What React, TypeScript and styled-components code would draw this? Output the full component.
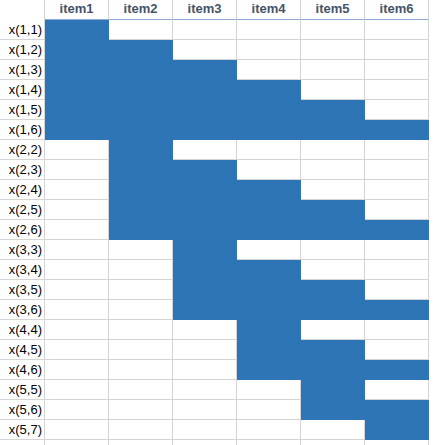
import React from "react";
import styled, { createGlobalStyle } from "styled-components";

const GlobalStyle = createGlobalStyle`
  body {
    margin: 0;
    background: #ffffff;
    overflow: hidden;
  }
`;

const ITEMS = ["item1", "item2", "item3", "item4", "item5", "item6"];

// label, first filled column, last filled column (1-based)
const ROWS: Array<[string, number, number]> = [
  ["x(1,1)", 1, 1],
  ["x(1,2)", 1, 2],
  ["x(1,3)", 1, 3],
  ["x(1,4)", 1, 4],
  ["x(1,5)", 1, 5],
  ["x(1,6)", 1, 6],
  ["x(2,2)", 2, 2],
  ["x(2,3)", 2, 3],
  ["x(2,4)", 2, 4],
  ["x(2,5)", 2, 5],
  ["x(2,6)", 2, 6],
  ["x(3,3)", 3, 3],
  ["x(3,4)", 3, 4],
  ["x(3,5)", 3, 5],
  ["x(3,6)", 3, 6],
  ["x(4,4)", 4, 4],
  ["x(4,5)", 4, 5],
  ["x(4,6)", 4, 6],
  ["x(5,5)", 5, 5],
  ["x(5,6)", 5, 6],
  ["x(5,7)", 6, 6],
];

const Sheet = styled.div`
  display: grid;
  grid-template-columns: 45px repeat(6, 64px) 1fr;
  grid-auto-rows: 20px;
  width: 434px;
  font-family: "Liberation Sans", Arial, sans-serif;
  font-size: 13px;
  color: #000000;
`;

const Corner = styled.div`
  height: 21px;
  box-sizing: border-box;
  border-right: 1px solid #d4d4d4;
`;

const HeadCell = styled.div`
  height: 21px;
  box-sizing: border-box;
  border-right: 1px solid #d4d4d4;
  border-bottom: 2px solid #8ea9db;
  display: flex;
  align-items: flex-end;
  justify-content: center;
  padding-bottom: 3px;
  font-weight: 700;
  color: #44546a;
`;

const HeadSpacer = styled.div`
  height: 21px;
`;

const Label = styled.div`
  box-sizing: border-box;
  border-right: 1px solid #d4d4d4;
  border-bottom: 1px solid #d4d4d4;
  display: flex;
  align-items: flex-end;
  justify-content: flex-end;
  padding: 0 2px 3px 0;
  line-height: 1;
`;

const Cell = styled.div<{ $filled: boolean }>`
  box-sizing: border-box;
  background: ${({ $filled }) => ($filled ? "#2e75b6" : "#ffffff")};
  border-right: 1px solid ${({ $filled }) => ($filled ? "#2e75b6" : "#d4d4d4")};
  border-bottom: 1px solid ${({ $filled }) => ($filled ? "#2e75b6" : "#d4d4d4")};
`;

const Spacer = styled.div``;

export default function App() {
  return (
    <>
      <GlobalStyle />
      <Sheet>
        <Corner />
        {ITEMS.map((it) => (
          <HeadCell key={it}>{it}</HeadCell>
        ))}
        <HeadSpacer />

        {ROWS.map(([label, from, to]) => (
          <React.Fragment key={label}>
            <Label>{label}</Label>
            {ITEMS.map((it, i) => (
              <Cell key={it} $filled={i + 1 >= from && i + 1 <= to} />
            ))}
            <Spacer />
          </React.Fragment>
        ))}

        {/* partial row peeking at the bottom edge */}
        <Label />
        {ITEMS.map((it) => (
          <Cell key={it} $filled={false} />
        ))}
        <Spacer />
      </Sheet>
    </>
  );
}
